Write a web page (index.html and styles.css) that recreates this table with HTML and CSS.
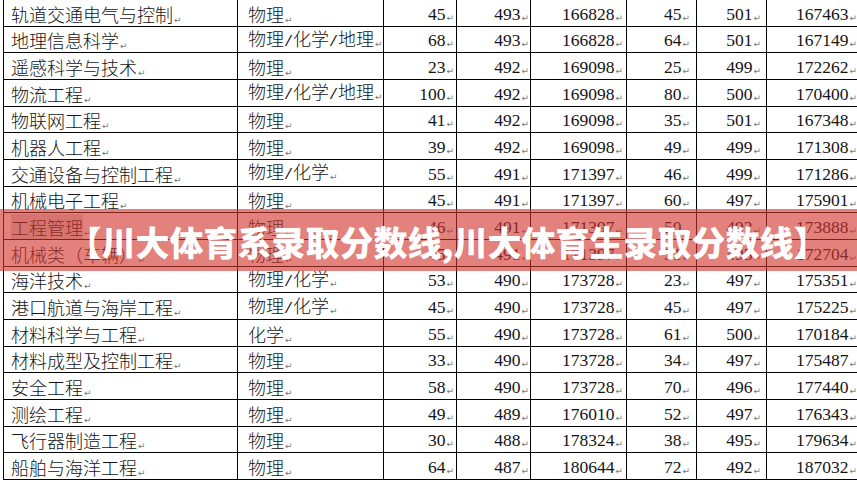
FILE: index.html
```html
<!DOCTYPE html>
<html lang="zh">
<head>
<meta charset="utf-8">
<title>川大体育系录取分数线</title>
<link rel="stylesheet" href="styles.css">
</head>
<body>
<div class="page">
  <table class="scores">
    <colgroup>
      <col class="c1"><col class="c2"><col class="c3"><col class="c4"><col class="c5"><col class="c6"><col class="c7"><col class="c8">
    </colgroup>
    <tbody>
      <tr><td class="name">轨道交通电气与控制<i>↵</i></td><td class="subj">物理<i>↵</i></td><td class="n3">45<i>↵</i></td><td class="n4">493<i>↵</i></td><td class="n5">166828<i>↵</i></td><td class="n6">45<i>↵</i></td><td class="n7">501<i>↵</i></td><td class="n8">167463<i>↵</i></td></tr>
      <tr><td class="name">地理信息科学<i>↵</i></td><td class="subj">物理<b>/</b>化学<b>/</b>地理<i>↵</i></td><td class="n3">68<i>↵</i></td><td class="n4">493<i>↵</i></td><td class="n5">166828<i>↵</i></td><td class="n6">64<i>↵</i></td><td class="n7">501<i>↵</i></td><td class="n8">167149<i>↵</i></td></tr>
      <tr><td class="name">遥感科学与技术<i>↵</i></td><td class="subj">物理<i>↵</i></td><td class="n3">23<i>↵</i></td><td class="n4">492<i>↵</i></td><td class="n5">169098<i>↵</i></td><td class="n6">25<i>↵</i></td><td class="n7">499<i>↵</i></td><td class="n8">172262<i>↵</i></td></tr>
      <tr><td class="name">物流工程<i>↵</i></td><td class="subj">物理<b>/</b>化学<b>/</b>地理<i>↵</i></td><td class="n3">100<i>↵</i></td><td class="n4">492<i>↵</i></td><td class="n5">169098<i>↵</i></td><td class="n6">80<i>↵</i></td><td class="n7">500<i>↵</i></td><td class="n8">170400<i>↵</i></td></tr>
      <tr><td class="name">物联网工程<i>↵</i></td><td class="subj">物理<i>↵</i></td><td class="n3">41<i>↵</i></td><td class="n4">492<i>↵</i></td><td class="n5">169098<i>↵</i></td><td class="n6">35<i>↵</i></td><td class="n7">501<i>↵</i></td><td class="n8">167348<i>↵</i></td></tr>
      <tr><td class="name">机器人工程<i>↵</i></td><td class="subj">物理<i>↵</i></td><td class="n3">39<i>↵</i></td><td class="n4">492<i>↵</i></td><td class="n5">169098<i>↵</i></td><td class="n6">49<i>↵</i></td><td class="n7">499<i>↵</i></td><td class="n8">171308<i>↵</i></td></tr>
      <tr><td class="name">交通设备与控制工程<i>↵</i></td><td class="subj">物理<b>/</b>化学<i>↵</i></td><td class="n3">55<i>↵</i></td><td class="n4">491<i>↵</i></td><td class="n5">171397<i>↵</i></td><td class="n6">46<i>↵</i></td><td class="n7">499<i>↵</i></td><td class="n8">171286<i>↵</i></td></tr>
      <tr><td class="name">机械电子工程<i>↵</i></td><td class="subj">物理<i>↵</i></td><td class="n3">45<i>↵</i></td><td class="n4">491<i>↵</i></td><td class="n5">171397<i>↵</i></td><td class="n6">60<i>↵</i></td><td class="n7">497<i>↵</i></td><td class="n8">175901<i>↵</i></td></tr>
      <tr><td class="name"><span class="sel">工程管理</span><i>↵</i></td><td class="subj">物理<i>↵</i></td><td class="n3">46<i>↵</i></td><td class="n4">491<i>↵</i></td><td class="n5">171397<i>↵</i></td><td class="n6">50<i>↵</i></td><td class="n7">492<i>↵</i></td><td class="n8">173888<i>↵</i></td></tr>
      <tr><td class="name">机械类（车辆）<i>↵</i></td><td class="subj">物理<i>↵</i></td><td class="n3">45<i>↵</i></td><td class="n4">491<i>↵</i></td><td class="n5">171397<i>↵</i></td><td class="n6">51<i>↵</i></td><td class="n7">495<i>↵</i></td><td class="n8">172704<i>↵</i></td></tr>
      <tr><td class="name">海洋技术<i>↵</i></td><td class="subj">物理<b>/</b>化学<i>↵</i></td><td class="n3">53<i>↵</i></td><td class="n4">490<i>↵</i></td><td class="n5">173728<i>↵</i></td><td class="n6">23<i>↵</i></td><td class="n7">497<i>↵</i></td><td class="n8">175351<i>↵</i></td></tr>
      <tr><td class="name">港口航道与海岸工程<i>↵</i></td><td class="subj">物理<b>/</b>化学<i>↵</i></td><td class="n3">45<i>↵</i></td><td class="n4">490<i>↵</i></td><td class="n5">173728<i>↵</i></td><td class="n6">45<i>↵</i></td><td class="n7">497<i>↵</i></td><td class="n8">175225<i>↵</i></td></tr>
      <tr><td class="name">材料科学与工程<i>↵</i></td><td class="subj">化学<i>↵</i></td><td class="n3">55<i>↵</i></td><td class="n4">490<i>↵</i></td><td class="n5">173728<i>↵</i></td><td class="n6">61<i>↵</i></td><td class="n7">500<i>↵</i></td><td class="n8">170184<i>↵</i></td></tr>
      <tr><td class="name">材料成型及控制工程<i>↵</i></td><td class="subj">物理<i>↵</i></td><td class="n3">33<i>↵</i></td><td class="n4">490<i>↵</i></td><td class="n5">173728<i>↵</i></td><td class="n6">34<i>↵</i></td><td class="n7">497<i>↵</i></td><td class="n8">175487<i>↵</i></td></tr>
      <tr><td class="name">安全工程<i>↵</i></td><td class="subj">物理<i>↵</i></td><td class="n3">58<i>↵</i></td><td class="n4">490<i>↵</i></td><td class="n5">173728<i>↵</i></td><td class="n6">70<i>↵</i></td><td class="n7">496<i>↵</i></td><td class="n8">177440<i>↵</i></td></tr>
      <tr><td class="name">测绘工程<i>↵</i></td><td class="subj">物理<i>↵</i></td><td class="n3">49<i>↵</i></td><td class="n4">489<i>↵</i></td><td class="n5">176010<i>↵</i></td><td class="n6">52<i>↵</i></td><td class="n7">497<i>↵</i></td><td class="n8">176343<i>↵</i></td></tr>
      <tr><td class="name">飞行器制造工程<i>↵</i></td><td class="subj">物理<i>↵</i></td><td class="n3">30<i>↵</i></td><td class="n4">488<i>↵</i></td><td class="n5">178324<i>↵</i></td><td class="n6">38<i>↵</i></td><td class="n7">495<i>↵</i></td><td class="n8">179634<i>↵</i></td></tr>
      <tr><td class="name">船舶与海洋工程<i>↵</i></td><td class="subj">物理<i>↵</i></td><td class="n3">64<i>↵</i></td><td class="n4">487<i>↵</i></td><td class="n5">180644<i>↵</i></td><td class="n6">72<i>↵</i></td><td class="n7">492<i>↵</i></td><td class="n8">187032<i>↵</i></td></tr>
    </tbody>
  </table>
  <div class="banner">【川大体育系录取分数线,川大体育生录取分数线】</div>
</div>
</body>
</html>
```

FILE: styles.css
```css
html, body {
  margin: 0;
  padding: 0;
  background: #ffffff;
}

.page {
  position: relative;
  width: 857px;
  height: 482px;
  overflow: hidden;
}

.scores {
  border-collapse: collapse;
  table-layout: fixed;
  width: 855px;
  margin: -1px 0 0 3px;
  font-family: "Liberation Serif", "Noto Sans CJK SC", serif;
  color: #141414;
}

.c1 { width: 234px; }
.c2 { width: 146px; }
.c3 { width: 73px; }
.c4 { width: 74px; }
.c5 { width: 96px; }
.c6 { width: 70px; }
.c7 { width: 70px; }
.c8 { width: 92px; }

.scores tr {
  height: 26.67px;
}

.scores td {
  height: 25.67px;
  box-sizing: border-box;
  border: 1px solid #000;
  padding: 2px 4px 0;
  white-space: nowrap;
  overflow: hidden;
  vertical-align: middle;
  font-size: 17.5px;
  line-height: 16px;
}

.scores td.name,
.scores td.subj {
  font-family: "Noto Sans CJK SC", sans-serif;
  font-weight: 300;
  font-size: 18px;
  text-align: left;
}

.scores td.name { padding-left: 7px; }
.scores td.subj { padding-left: 10px; }

.scores b {
  font-family: "Liberation Mono", monospace;
  font-weight: 400;
  font-size: 15px;
}

.n3, .n4, .n5, .n6, .n7, .n8 { text-align: right; }
.scores td.n3 { padding-right: 2px; }
.scores td.n4 { padding-right: 1px; }
.scores td.n5 { padding-right: 3px; }
.scores td.n6 { padding-right: 6px; }
.scores td.n7 { padding-right: 5px; }
.scores td.n8 { padding-right: 1px; }

.scores i {
  font-style: normal;
  font-family: "DejaVu Sans", sans-serif;
  font-weight: 400;
  font-size: 9px;
  line-height: 0;
  color: #777;
  vertical-align: -1px;
  margin-left: 1px;
}

.sel {
  background: rgba(0, 0, 0, 0.13);
}

.banner {
  position: absolute;
  left: 0;
  right: 0;
  top: 209px;
  height: 62px;
  padding: 3px 0 0 38px;
  box-sizing: border-box;
  display: flex;
  align-items: center;
  justify-content: center;
  background: rgba(210, 52, 45, 0.62);
  color: #ffffff;
  font-family: "Noto Sans CJK SC", sans-serif;
  font-weight: 900;
  font-size: 34px;
  white-space: nowrap;
}
```
